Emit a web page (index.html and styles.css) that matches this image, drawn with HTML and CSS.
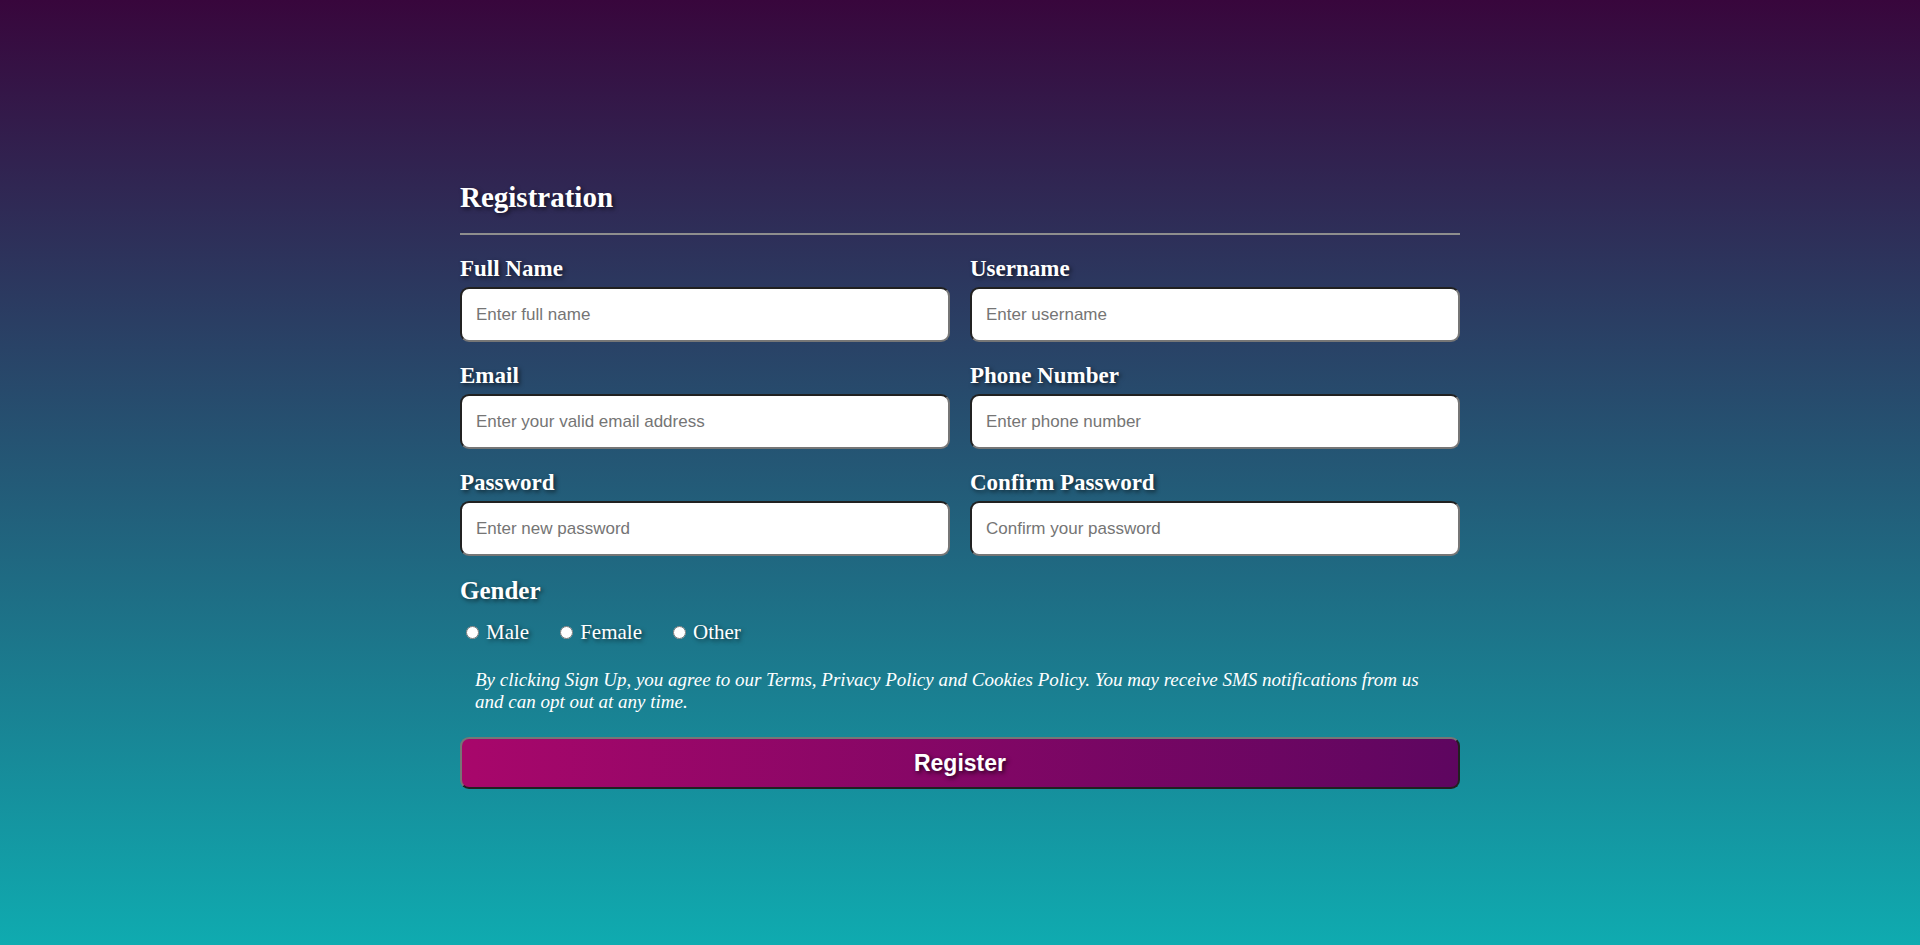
FILE: index.html
```html
<!DOCTYPE html>
<html lang="en">
<head>
<meta charset="utf-8">
<title>Registration</title>
<link rel="stylesheet" href="styles.css">
</head>
<body>
  <div class="container">
    <h2 class="title">Registration</h2>
    <div class="divider"></div>
    <form class="form">
      <div class="grid">
        <div class="field">
          <label class="label">Full Name</label>
          <input class="input" type="text" placeholder="Enter full name">
        </div>
        <div class="field">
          <label class="label">Username</label>
          <input class="input" type="text" placeholder="Enter username">
        </div>
        <div class="field">
          <label class="label">Email</label>
          <input class="input" type="text" placeholder="Enter your valid email address">
        </div>
        <div class="field">
          <label class="label">Phone Number</label>
          <input class="input" type="text" placeholder="Enter phone number">
        </div>
        <div class="field">
          <label class="label">Password</label>
          <input class="input" type="text" placeholder="Enter new password">
        </div>
        <div class="field">
          <label class="label">Confirm Password</label>
          <input class="input" type="text" placeholder="Confirm your password">
        </div>
      </div>
      <div class="gender-title">Gender</div>
      <div class="gender-options">
        <label class="option"><input class="radio" type="radio" name="gender">Male</label>
        <label class="option"><input class="radio" type="radio" name="gender">Female</label>
        <label class="option"><input class="radio" type="radio" name="gender">Other</label>
      </div>
      <p class="terms">By clicking Sign Up, you agree to our Terms, Privacy Policy and Cookies Policy. You may receive SMS notifications from us and can opt out at any time.</p>
      <button class="submit" type="button">Register</button>
    </form>
  </div>
</body>
</html>
```

FILE: styles.css
```css
html, body {
  margin: 0;
  padding: 0;
}

body {
  min-height: 100vh;
  background: linear-gradient(to bottom, #38063c 0%, #0fabb0 100%);
  font-family: "Liberation Serif", "Times New Roman", serif;
  color: #fff;
  box-sizing: border-box;
  padding-top: 181px;
}

.container {
  width: 1000px;
  margin: 0 auto;
}

.title {
  margin: 0 0 19px 0;
  font-size: 29px;
  font-weight: bold;
  line-height: 33px;
  text-shadow: 2px 2px 4px rgba(0, 0, 0, 0.6);
}

.divider {
  height: 2px;
  background: #8e8e8e;
  margin-bottom: 21px;
}

.form {
  margin: 0;
}

.grid {
  display: grid;
  grid-template-columns: 1fr 1fr;
  column-gap: 20px;
  row-gap: 21px;
}

.field {
  display: flex;
  flex-direction: column;
}

.label {
  font-size: 23px;
  font-weight: bold;
  line-height: 26px;
  margin-bottom: 5px;
  text-shadow: 2px 2px 4px rgba(0, 0, 0, 0.6);
}

.input {
  box-sizing: border-box;
  height: 55px;
  width: 100%;
  padding: 0 14px;
  border: 2px inset #767676;
  border-radius: 9px;
  background: #fff;
  font-family: "Liberation Sans", Arial, sans-serif;
  font-size: 17px;
  color: #000;
  outline: none;
}

.input::placeholder {
  color: #757575;
}

.gender-title {
  margin-top: 20px;
  font-size: 25px;
  font-weight: bold;
  line-height: 29px;
  text-shadow: 2px 2px 4px rgba(0, 0, 0, 0.6);
}

.gender-options {
  display: flex;
  align-items: center;
  gap: 25px;
  margin-top: 15px;
  height: 24px;
}

.option {
  display: flex;
  align-items: center;
  font-size: 21px;
  line-height: 24px;
  text-shadow: 2px 2px 4px rgba(0, 0, 0, 0.6);
}

.radio {
  width: 13px;
  height: 13px;
  margin: 0 7px 0 6px;
}

.terms {
  margin: 25px 0 0 0;
  padding: 0 15px;
  font-size: 19px;
  font-style: italic;
  line-height: 22px;
}

.submit {
  display: block;
  box-sizing: border-box;
  width: 100%;
  height: 52px;
  margin-top: 24px;
  border: 2px outset #767676;
  border-radius: 9px;
  background: linear-gradient(to right, #a8076b 0%, #5e0660 100%);
  color: #fff;
  font-family: "Liberation Sans", Arial, sans-serif;
  font-size: 23px;
  font-weight: bold;
  text-shadow: 2px 2px 4px rgba(0, 0, 0, 0.7);
  cursor: pointer;
}
```
